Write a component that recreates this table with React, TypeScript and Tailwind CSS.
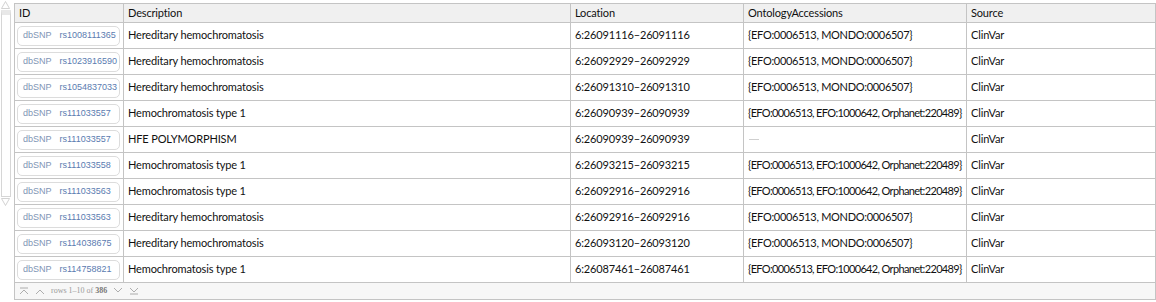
import React from "react";

const rows = [
  ["rs1008111365", "Hereditary hemochromatosis", "6:26091116–26091116", "{EFO:0006513, MONDO:0006507}"],
  ["rs1023916590", "Hereditary hemochromatosis", "6:26092929–26092929", "{EFO:0006513, MONDO:0006507}"],
  ["rs1054837033", "Hereditary hemochromatosis", "6:26091310–26091310", "{EFO:0006513, MONDO:0006507}"],
  ["rs111033557", "Hemochromatosis type 1", "6:26090939–26090939", "{EFO:0006513, EFO:1000642, Orphanet:220489}"],
  ["rs111033557", "HFE POLYMORPHISM", "6:26090939–26090939", ""],
  ["rs111033558", "Hemochromatosis type 1", "6:26093215–26093215", "{EFO:0006513, EFO:1000642, Orphanet:220489}"],
  ["rs111033563", "Hemochromatosis type 1", "6:26092916–26092916", "{EFO:0006513, EFO:1000642, Orphanet:220489}"],
  ["rs111033563", "Hereditary hemochromatosis", "6:26092916–26092916", "{EFO:0006513, MONDO:0006507}"],
  ["rs114038675", "Hereditary hemochromatosis", "6:26093120–26093120", "{EFO:0006513, MONDO:0006507}"],
  ["rs114758821", "Hemochromatosis type 1", "6:26087461–26087461", "{EFO:0006513, EFO:1000642, Orphanet:220489}"],
];

const cols = "grid grid-cols-[109px_447px_173px_223px_1fr]";
const font = { fontFamily: "Lato, 'Noto Sans', sans-serif" };

function Chev({ dir, bar }: { dir: "up" | "down"; bar?: boolean }) {
  return (
    <svg width="10" height="8" viewBox="0 0 10 8" className="text-[#9a9a9a]">
      {dir === "up" ? (
        <>
          {bar && <line x1="1" y1="1" x2="9" y2="1" stroke="currentColor" strokeWidth="0.8" />}
          <polyline points="1,7 5,3 9,7" fill="none" stroke="currentColor" strokeWidth="0.8" />
        </>
      ) : (
        <>
          <polyline points="1,1 5,5 9,1" fill="none" stroke="currentColor" strokeWidth="0.8" />
          {bar && <line x1="1" y1="7" x2="9" y2="7" stroke="currentColor" strokeWidth="0.8" />}
        </>
      )}
    </svg>
  );
}

export default function App() {
  return (
    <div className="w-[1156px] h-[302px] bg-white flex" style={font}>
      {/* left scroll control */}
      <div className="w-[11px] flex flex-col items-center pt-[1px]">
        <svg width="9" height="8" viewBox="0 0 9 8">
          <polygon points="4.5,0.5 8.5,7.5 0.5,7.5" fill="none" stroke="#c8c8c8" strokeWidth="0.8" />
        </svg>
        <div className="w-[10px] h-[187px] mt-[1px] border border-[#d6d6d6] bg-white" style={{ borderTop: "5px solid #e8e8e8" }} />
        <svg width="9" height="8" viewBox="0 0 9 8" className="mt-[1px]">
          <polygon points="0.5,0.5 8.5,0.5 4.5,7.5" fill="none" stroke="#c8c8c8" strokeWidth="0.8" />
        </svg>
      </div>
      <div className="ml-[3px] mt-[3px] w-[1142px] h-[297px] border border-[#c4c4c4] flex flex-col text-[11px] tracking-[-0.15px] text-[#111] whitespace-nowrap">
        <div className={`${cols} h-[19px] bg-[#f0f0f0] border-b border-[#c4c4c4]`}>
          {["ID", "Description", "Location", "OntologyAccessions", "Source"].map((h, i) => (
            <div key={h} className={`pl-[4px] flex items-center ${i < 4 ? "border-r border-[#c4c4c4]" : ""}`}>
              {h}
            </div>
          ))}
        </div>
        {rows.map((r, idx) => (
          <div key={idx} className={`${cols} h-[26px] border-b border-[#c4c4c4]`}>
            <div className="border-r border-[#c4c4c4] flex items-center pl-[2px]">
              <div
                className="h-[20px] w-[103px] rounded-[5px] border border-[#dcdcdc] flex items-center pl-[5px] gap-[8px] text-[9px] tracking-normal"
                style={{ fontFamily: "'Liberation Sans', Arial, sans-serif" }}
              >
                <span className="text-[#8095b5]">dbSNP</span>
                <span className="text-[#5a7bb0]">{r[0]}</span>
              </div>
            </div>
            <div className="border-r border-[#c4c4c4] flex items-center pl-[4px]">{r[1]}</div>
            <div className="border-r border-[#c4c4c4] flex items-center pl-[4px]">{r[2]}</div>
            <div
              className={`border-r border-[#c4c4c4] flex items-center pl-[4px] overflow-hidden ${
                r[3].length > 30 ? "tracking-[-0.66px]" : "tracking-[-0.3px]"
              }`}
            >
              {r[3] ? r[3] : <span className="inline-block w-[10px] h-[1px] bg-[#cfcfcf] ml-[1px]" />}
            </div>
            <div className="flex items-center pl-[4px]">ClinVar</div>
          </div>
        ))}
        <div className="flex-1 bg-[#f7f7f7] flex items-center pl-[4px] gap-[6px] text-[8px] tracking-normal text-[#9a9a9a]" style={{ fontFamily: "'Liberation Serif', serif" }}>
          <Chev dir="up" bar />
          <Chev dir="up" />
          <span>
            rows 1–10 of <b className="text-[#777]">386</b>
          </span>
          <Chev dir="down" />
          <Chev dir="down" bar />
        </div>
      </div>
    </div>
  );
}
